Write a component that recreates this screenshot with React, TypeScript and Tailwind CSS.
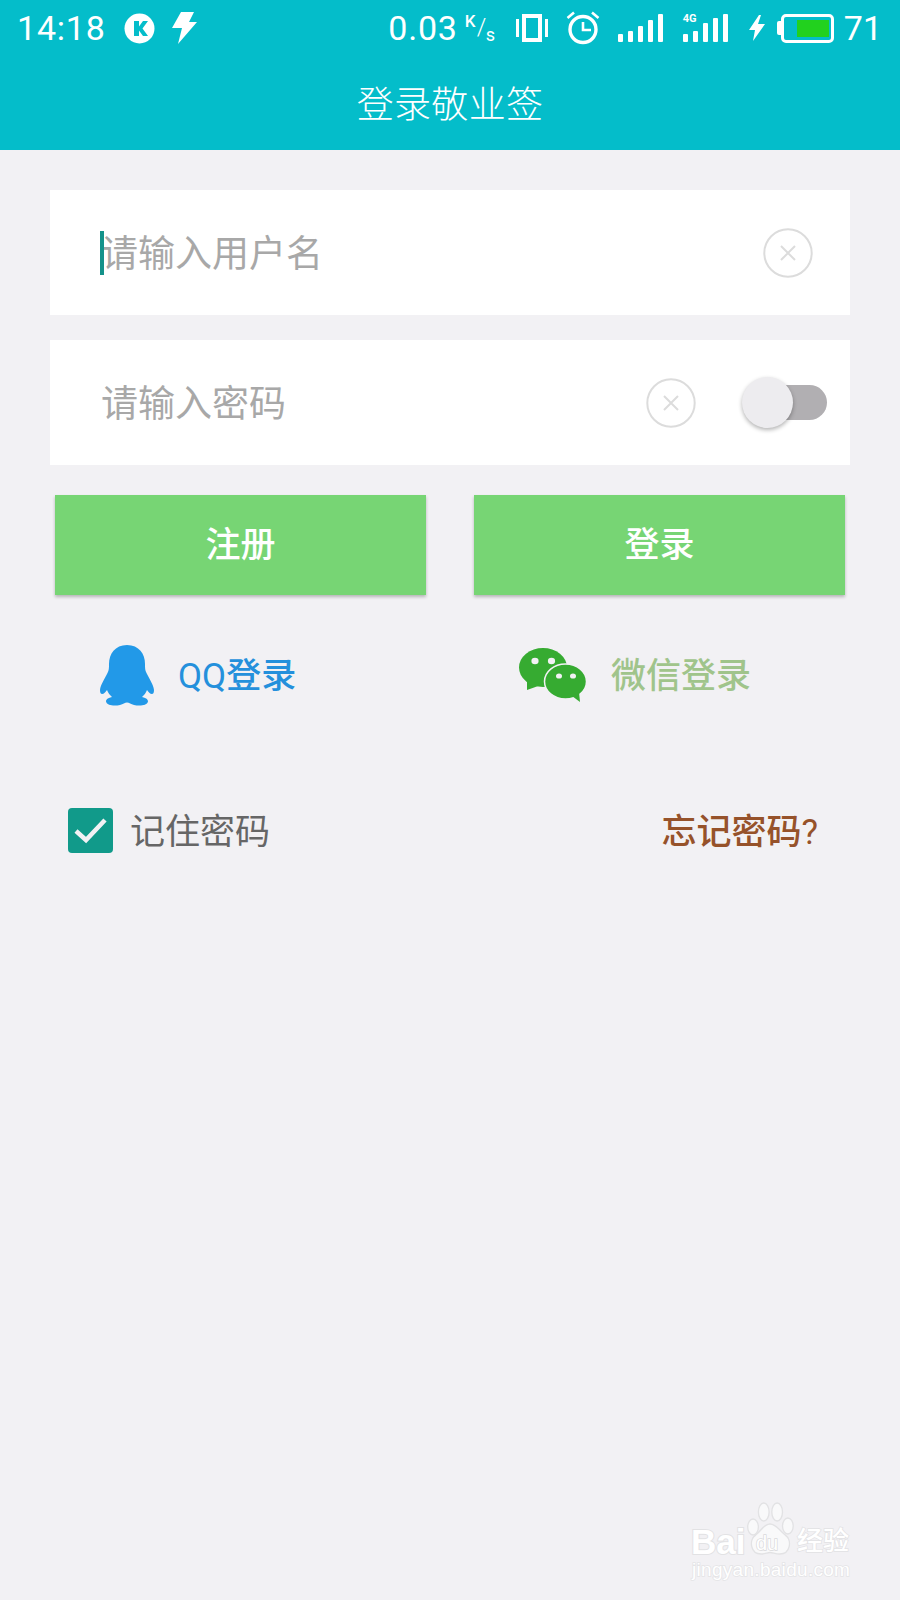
import React from "react";

const cjk = "font-['Roboto','Noto_Sans_CJK_SC',sans-serif]";

function ClearIcon() {
  return (
    <svg width="50" height="50" viewBox="0 0 50 50" className="shrink-0">
      <circle cx="25" cy="25" r="23.7" fill="none" stroke="#dcdcdc" strokeWidth="2" />
      <path d="M18 18 L32 32 M32 18 L18 32" stroke="#dcdcdc" strokeWidth="2" fill="none" />
    </svg>
  );
}

function Penguin() {
  return (
    <svg width="54" height="61" viewBox="0 0 54 61" className="shrink-0">
      <path
        fill="#2299e8"
        d="M27 0 C15 0 9 9 9 19 C9 23 9 25 7.5 28 C4.5 34 0.5 40 0 45 C0 48 1 49 2 49 C4 49 5.5 47 7 45 C8 48 10 50 12 52 C7 53 6 55 6 56.5 C7 61 15 61 20 60 C23 59 25 57.5 27 57.5 C29 57.5 31 59 34 60 C39 61 47 61 48 56.5 C48 55 47 53 42 52 C44 50 46 48 47 45 C48.5 47 50 49 52 49 C53 49 54 48 54 45 C53.5 40 49.5 34 46.5 28 C45 25 45 23 45 19 C45 9 39 0 27 0 Z"
      />
    </svg>
  );
}

function WeChat() {
  return (
    <svg width="68" height="54" viewBox="0 0 68 54" className="shrink-0">
      <ellipse cx="24" cy="19.5" rx="24" ry="19.5" fill="#36ab31" />
      <path d="M8 31 L8 42 L22 37 Z" fill="#36ab31" />
      <ellipse cx="46.5" cy="33.5" rx="21" ry="17.5" fill="#36ab31" stroke="#f2f1f4" strokeWidth="1.5" />
      <path d="M53 48 L61 54 L60 44 Z" fill="#36ab31" />
      <ellipse cx="16" cy="13" rx="3.6" ry="3.2" fill="#f2f1f4" />
      <ellipse cx="32.5" cy="13" rx="3.6" ry="3.2" fill="#f2f1f4" />
      <ellipse cx="40" cy="28" rx="3" ry="2.6" fill="#f2f1f4" />
      <ellipse cx="54" cy="28" rx="3" ry="2.6" fill="#f2f1f4" />
    </svg>
  );
}

function Signal({ bars }: { bars: number[] }) {
  return (
    <div className="flex items-end gap-[5px] h-[28px]">
      {bars.map((h, i) => (
        <div key={i} className="w-[5px] bg-white rounded-[1px]" style={{ height: h }} />
      ))}
    </div>
  );
}

function StatusBar() {
  return (
    <div className="h-[56px] flex items-center justify-between pl-[17px] pr-[18px] text-white font-['Roboto',sans-serif]">
      <div className="flex items-center">
        <span className="text-[34px] leading-none tracking-[0.8px]">14:18</span>
        <svg width="31" height="31" viewBox="0 0 31 31" className="ml-[18px]">
          <circle cx="15.5" cy="15.5" r="15" fill="#fff" />
          <path d="M10 8 H15 V13.5 L19 8 H24 L18.5 15.5 L24 23 H19 L15 17.5 V23 H10 Z" fill="#04bdca" />
        </svg>
        <svg width="25" height="32" viewBox="0 0 25 32" className="ml-[17px]">
          <path d="M9 0 H22 L17 10 H25 L6 32 L10 16 H0 Z" fill="#fff" />
        </svg>
      </div>
      <div className="flex items-center">
        <span className="text-[34px] leading-none tracking-[0.8px]">0.03</span>
        <span className="ml-[7px] w-[31px] h-[30px] relative leading-none">
          <span className="absolute left-0 top-0 text-[17px] font-medium">K</span>
          <span className="absolute left-[12px] top-[2px] text-[24px] font-light">/</span>
          <span className="absolute left-[21px] top-[13px] text-[18px]">s</span>
        </span>
        <svg width="32" height="28" viewBox="0 0 32 28" className="ml-[20px]">
          <path d="M1.5 5 V23 M30.5 5 V23" stroke="#fff" strokeWidth="3" />
          <rect x="8" y="2" width="16" height="24" fill="none" stroke="#fff" strokeWidth="4" />
        </svg>
        <svg width="34" height="34" viewBox="0 0 34 34" className="ml-[18px]">
          <circle cx="17" cy="18.5" r="13" fill="none" stroke="#fff" strokeWidth="3.4" />
          <path d="M17 11 V19 H25" fill="none" stroke="#fff" strokeWidth="2.6" />
          <path d="M1.5 7 L8 1.5 M32.5 7 L26 1.5" stroke="#fff" strokeWidth="2.6" />
        </svg>
        <div className="ml-[18px]">
          <Signal bars={[8, 11, 16, 22, 28]} />
        </div>
        <div className="ml-[20px] relative">
          <Signal bars={[8, 11, 19, 24, 28]} />
          <span className="absolute left-0 top-[-1px] text-[11px] leading-none font-bold">4G</span>
        </div>
        <svg width="16" height="26" viewBox="0 0 16 26" className="ml-[21px]">
          <path d="M10 0 L0 15 H6 L4 26 L16 9 H9 L12 0 Z" fill="#fff" />
        </svg>
        <div className="ml-[12px] flex items-center">
          <div className="w-[4px] h-[14px] bg-white rounded-l-[2px]" />
          <div className="w-[53px] h-[29px] border-[3px] border-white rounded-[5px] pl-[13px] pr-[2px] py-[3px]">
            <div className="h-full bg-[#22d11e]" />
          </div>
        </div>
        <span className="ml-[10px] text-[34px] leading-none">71</span>
      </div>
    </div>
  );
}

function Field({ children }: { children: React.ReactNode }) {
  return <div className="h-[125px] bg-white flex items-center pl-[51px] pr-[37px] relative">{children}</div>;
}

function Watermark() {
  return (
    <div className="absolute left-[690px] top-[1500px] w-[170px] h-[82px] text-white font-['Liberation_Sans',sans-serif]">
      <span className="absolute left-[1px] top-[24px] text-[35px] leading-none font-bold [-webkit-text-stroke:2px_#e2e2e4] [paint-order:stroke_fill]">Bai</span>
      <svg width="50" height="54" viewBox="0 0 56 54" preserveAspectRatio="none" className="absolute left-[55px] top-[2px]">
        <g fill="#f9f9fa" stroke="#e2e2e4" strokeWidth="1.5">
          <ellipse cx="9" cy="25" rx="6" ry="8" />
          <ellipse cx="21" cy="10" rx="6" ry="9" />
          <ellipse cx="36" cy="10" rx="6" ry="9" />
          <ellipse cx="48" cy="24" rx="6" ry="8" />
          <path d="M28 22 C21 22 19 28 12 33 C4 38 6 52 18 52 C23 52 25 50.5 28 50.5 C31 50.5 34 52 39 52 C51 52 53 38 45 33 C38 28 35 22 28 22 Z" />
        </g>
      </svg>
      <span className="absolute left-[66px] top-[33px] text-[20px] leading-none text-white [-webkit-text-stroke:1.5px_#dadadc] [paint-order:stroke_fill]">du</span>
      <span className={`absolute left-[107px] top-[28px] text-[26px] leading-none font-medium [-webkit-text-stroke:1.5px_#e2e2e4] [paint-order:stroke_fill] ${cjk}`}>经验</span>
      <span className="absolute left-[2px] top-[60px] text-[19px] leading-none tracking-[0.3px] [-webkit-text-stroke:1.5px_#e4e4e6] [paint-order:stroke_fill]">jingyan.baidu.com</span>
    </div>
  );
}

export default function App() {
  return (
    <div className={`relative w-[900px] h-[1600px] overflow-hidden bg-[#f2f1f4] ${cjk}`}>
      <header className="h-[150px] bg-[#04bdca] flex flex-col">
        <StatusBar />
        <div className="flex-1 flex items-start justify-center pt-[28px]">
          <h1 className="text-[37px] leading-[1.2] text-white font-light tracking-[0.3px]">登录敬业签</h1>
        </div>
      </header>

      <main className="px-[50px] pt-[40px] flex flex-col">
        <Field>
          <div className="absolute left-[50px] top-[41px] w-[4px] h-[44px] bg-[#14928a]" />
          <span className="flex-1 pt-[4px] text-[37px] leading-none text-[#a8a8a8]">请输入用户名</span>
          <ClearIcon />
        </Field>
        <div className="mt-[25px]">
          <Field>
            <span className="flex-1 pt-[4px] text-[37px] leading-none text-[#a8a8a8]">请输入密码</span>
            <ClearIcon />
            <div className="ml-[46px] mr-[-14px] w-[85px] h-[51px] relative flex items-center justify-end shrink-0">
              <div className="w-[72px] h-[35px] rounded-full bg-[#b1afb2]" />
              <div className="absolute left-0 top-0 w-[51px] h-[51px] rounded-full bg-[#edecef] shadow-[0_2px_4px_rgba(0,0,0,0.3)]" />
            </div>
          </Field>
        </div>

        <div className="mt-[30px] px-[5px] flex gap-[48px]">
          <button className="flex-1 h-[100px] pt-[3px] bg-[#77d574] text-white text-[35px] font-medium shadow-[0_2px_3px_rgba(0,0,0,0.25)]">注册</button>
          <button className="flex-1 h-[100px] pt-[3px] bg-[#77d574] text-white text-[35px] font-medium shadow-[0_2px_3px_rgba(0,0,0,0.25)]">登录</button>
        </div>

        <div className="mt-[50px] flex items-center h-[60px]">
          <div className="w-[469px] pl-[50px] flex items-center">
            <Penguin />
            <span className="ml-[24px] pt-[2px] text-[35px] leading-none text-[#2490dc]">
              QQ<span className="font-medium">登录</span>
            </span>
          </div>
          <WeChat />
          <span className="ml-[24px] pt-[2px] text-[35px] leading-none text-[#a0c48b] font-medium">微信登录</span>
        </div>

        <div className="mt-[103px] pl-[18px] pr-[32px] flex items-center justify-between">
          <div className="flex items-center">
            <div className="w-[45px] h-[45px] rounded-[4px] bg-[#119a8a] flex items-center justify-center">
              <svg width="35" height="28" viewBox="0 0 35 28" className="mt-[-2px]">
                <path d="M3 15 L13 24 L32 4" fill="none" stroke="#f2f1f4" strokeWidth="4.5" />
              </svg>
            </div>
            <span className="ml-[17px] pt-[4px] text-[35px] leading-none text-[#666666]">记住密码</span>
          </div>
          <span className="pt-[4px] text-[35px] leading-none text-[#96522a]">
            <span className="font-medium">忘记密码</span>?
          </span>
        </div>
      </main>

      <Watermark />
    </div>
  );
}
